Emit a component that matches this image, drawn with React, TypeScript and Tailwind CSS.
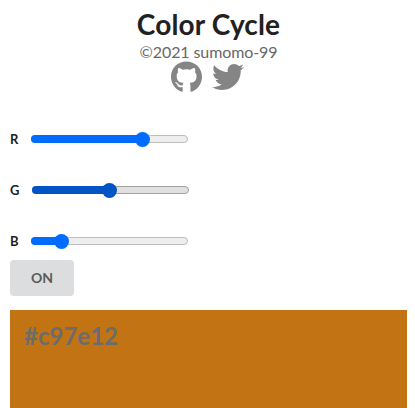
import { FaGithub, FaTwitter } from "react-icons/fa";

type SliderProps = { label: string; value: number; active?: boolean };

function ColorSlider({ label, value, active = false }: SliderProps) {
  const offset = (value / 255) * 142;
  const fill = active ? "bg-[#0054c4]" : "bg-[#006cff]";
  return (
    <div className="flex h-[51px] items-center">
      <span className="w-[21px] text-[13px] leading-4 font-bold text-[#212122]">{label}</span>
      <div
        role="slider"
        aria-label={label}
        aria-valuenow={value}
        className={`relative mt-px h-2 w-[157px] rounded-full border ${active ? "ml-px border-[#a2a2a2] bg-[#e0e0e0]" : "border-[#bdbdbd] bg-[#eeeeee]"}`}
      >
        <div className={`-mt-px -ml-px h-2 rounded-full ${fill}`} style={{ width: offset + 8 }} />
        <div className={`absolute -top-1 size-[15px] rounded-full ${fill}`} style={{ left: offset - 1 }} />
      </div>
    </div>
  );
}

export default function App() {
  return (
    <main className="h-[408px] overflow-hidden bg-white pr-2 pl-[10px] font-['Lato',sans-serif]">
      <header className="flex flex-col items-center pt-[6px]">
        <h1 className="mb-px text-[28px] leading-9 font-bold tracking-[0.15px] text-[#212122]">Color Cycle</h1>
        <p className="text-[16px] leading-[18px] tracking-[-0.1px] text-[#676767]">©2021 sumomo-99</p>
        <div className="flex gap-[10px] pr-[3px] text-[32px] leading-8 text-[#858585]">
          <FaGithub className="h-8 w-[31px]" />
          <FaTwitter className="size-8" />
        </div>
      </header>
      <section className="mt-5">
        <ColorSlider label="R" value={186} />
        <ColorSlider label="G" value={125} active />
        <ColorSlider label="B" value={41} />
      </section>
      <button className="mt-[-6px] block h-9 w-16 rounded bg-[#dcddde] text-[14px] leading-[14px] font-bold text-[#5a5b5b]">
        ON
      </button>
      <section className="mt-[14px] h-[98px] bg-[#c27414] px-[14px] pt-[13px] text-[24px] leading-[25px] font-bold text-[#6c6c6c]">
        #c97e12
      </section>
    </main>
  );
}
